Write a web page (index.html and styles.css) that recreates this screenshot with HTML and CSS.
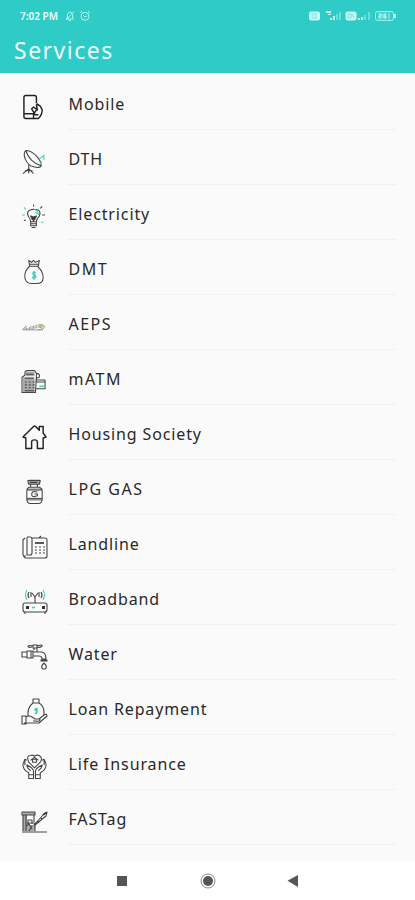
FILE: index.html
```html
<!DOCTYPE html>
<html lang="en">
<head>
<meta charset="utf-8">
<title>Services</title>
<link rel="stylesheet" href="styles.css">
</head>
<body>
<div class="screen">
<header class="header">
  <div class="status">
    <span class="time">7:02 PM</span>
    <svg class="bell" width="10" height="12" viewBox="0 0 10 12"><path d="M1.5 9h7L7.500 7V4.500Q7 2 5 2T2.500 4.500V7zM4 10.500h2M1 10L9 1.500"/></svg>
    <svg class="alarm" width="12" height="12" viewBox="0 0 12 12"><circle cx="6" cy="6.300" r="4"/><path d="M1 3L3 1M11 3L9 1M4 5l2 2 2-1"/></svg>
    <svg class="signals" width="88" height="12" viewBox="0 0 88 12">
      <rect class="fill" x="0" y="1.500" width="11" height="9" rx="2"/><path class="teal" d="M3 4h5M3 6h2M6 6h2M3 8h5"/>
      <path class="fill" d="M17 1h5v2h-5zM19 4h3v1h-3zM21 8h2v2h-2zM24 6h2v4h-2z"/><path class="fill faint" d="M27 4h2v6h-2zM30 2h2v8h-2z"/>
      <rect class="fill" x="36.500" y="1.500" width="11" height="9" rx="2"/><path class="teal" d="M39 4h3v4h-3zM43 4l2 4"/>
      <path class="fill" d="M49 8h2v2h-2zM52 7h2v3h-2z"/><path class="fill faint" d="M55 5h2v5h-2zM59 2h2v8h-2z"/>
      <rect x="66.500" y="1.700" width="18" height="8.600" rx="2"/><path class="fill" d="M85 4h2v4h-2z"/><rect class="fill faint" x="69" y="3.500" width="9" height="5"/><path d="M70 4h2v2h-2v2h2M77 4h-2v4h2V6h-2M80 3v6"/>
    </svg>
  </div>
  <h1 class="title">Services</h1>
</header>
<main class="list">
  <div class="row"><svg class="icon bold" viewBox="0 0 26 26"><path d="M15 9V3Q15 1 13 1H4Q2 1 2 3v20q0 2 2 2h13q4-4 4-9l-2-4-3-2-1 1M2 20h10M12 25v-4l1-1-3-5 2-2 4 3-1-5q2-1 3 1M13 21l4 0M15 16l-2 3"/></svg><span class="label">Mobile</span></div>
  <div class="row"><svg class="icon" viewBox="0 0 26 26"><path d="M4 1C0 5 4 16 12 18q6 2 8-1C20 10 11 1 4 1C6 9 13 15 20 17M7 16v5M1 25l6-5 5 5M7 20v5M3 22h8"/><path class="green" d="M18 10l2-2M20 7q3 0 3 4M20 12l-1 4M22 6l2 1"/></svg><span class="label">DTH</span></div>
  <div class="row"><svg class="icon" viewBox="0 0 26 26"><path d="M9 18q0-3-2-5Q3 6 12 5q9 0 6 7-3 3-3 6zM9 18v4h6v-4M9 20h6M10 24h4M9 12l3 2 3-2M12 14v4M10 15h4M12 0v2M21 11h3M19 4l2-2M2 17l2-1"/><path class="green" d="M12 5q5 1 5 6M2 3l2 2M0 11h3M20 18l2 1M14 8l2 2"/><path class="dark" d="M9 12l3 1 3-1-2 4h-2z"/></svg><span class="label">Electricity</span></div>
  <div class="row"><svg class="icon" viewBox="0 0 26 26"><path d="M8 7Q2 12 3 19q1 6 7 6h5q7 0 7-6 0-7-6-12zM8 7L7 1l3 2 2-2 2 2 4-2-1 6M8 5h9"/><path class="green thick" d="M14.500 13.500q-3-1-3 1 0 1.500 2 1.500 2 2.500-1 3.500l-2-1M12.500 12v9"/></svg><span class="label caps">DMT</span></div>
  <div class="row"><svg class="icon aeps" viewBox="0 0 26 26"><path d="M0 16l4-4 1 4M2 15h4M7 16l1-3h4M7 15h4M11 16l1-4q5-1 3 2h-3M22 12q-5-1-5 1l4 1q0 2-5 2"/><path class="gold" d="M15 11q8-2 9 2l-3 3M18 12l5 1"/><path d="M1 16h21"/></svg><span class="label caps">AEPS</span></div>
  <div class="row"><svg class="icon" viewBox="0 0 26 26"><path class="gray" d="M1 8h12v16H1zM4 2h9v5H4z"/><path d="M0 24V8l3-2V3l2-2h8l2 3v4l-1 16zM4 5h8M15 4q4 0 3 4l-3 1M3 9h9M14 11h10v9H14M14 13h10M3 13h2M7 13h2M11 13h2M3 16h2M7 16h2M11 16h2M3 19h2M7 19h2M11 19h2M3 22h10"/><path class="green thick" d="M18 17.500h5"/></svg><span class="label caps">mATM</span></div>
  <div class="row"><svg class="icon bold" viewBox="0 0 26 26"><path d="M1 13L12 2q1-1 2 0l4 4V2h4v7l3 4-3 1v11h-6v-7q0-2-3-2t-3 2v7H4V14z"/></svg><span class="label">Housing Society</span></div>
  <div class="row"><svg class="icon" viewBox="0 0 26 26"><path class="gray" d="M7 0h12v5H7zM5 19h16v3H5zM5 9h16v2H5z"/><path d="M6 1h13l-1 4H7zM9 5v3M16 5v3M7 8h11q3 1 3 4v8q0 5-4 5H9q-4 0-4-5v-8q0-3 2-4zM5 11h16M5 20h16M8 3h8"/><path d="M16 13q-6-2-6 3 1 3 6 1v-2h-3"/></svg><span class="label caps">LPG GAS</span></div>
  <div class="row"><svg class="icon wide" viewBox="0 0 26 26"><path d="M3 4L1 6v15l2 3h20q2 0 2-2V6q0-2-2-2H10M5 3h3q2 0 2 2v14q0 2-2 2H5V3M1 22h3M17 4l2-2"/><path class="bold" d="M13 9h9"/><path d="M13 13h2M17 13h2M21 13h2M13 16h2M17 16h2M21 16h2M13 19h2M17 19h2M21 19h2"/></svg><span class="label">Landline</span></div>
  <div class="row"><svg class="icon wide" viewBox="0 0 26 26"><path d="M3 14h20q2 0 2 2v5q0 2-2 2H3q-2 0-2-2v-5q0-2 2-2M13 14V7M3 23v2M23 23v2M10 4l3 4 3-4M7 3q-2 3 0 6M19 3q2 3 0 6M9 3v5M17 3v5"/><path class="green" d="M5 1Q2 6 5 11M21 1q3 5 0 10"/><path class="dark dot" d="M4 17h3v3H4zM20 17h3v3h-3z"/><path class="green thick" d="M10 18.500h3"/></svg><span class="label">Broadband</span></div>
  <div class="row"><svg class="icon wide" viewBox="0 0 26 26"><path d="M0 8h5V7h6v7H5v-1H0zM5 7v7M9 7v7M11 8h8q5 0 5 7h-4q0-3-3-3h-6M12 6V4M15 4v4M10 3Q6 4 6 2q2-1 5 0M15 2q6-2 5 0-2 2-5 1M11 1h4v3h-4zM19 16h6v1h-6zM22 19q-4 4-1 6h2q3-2-1-6"/></svg><span class="label">Water</span></div>
  <div class="row"><svg class="icon wide" viewBox="0 0 26 26"><path d="M11 0h6v4h-6zM11 4Q6 8 6 14v3M17 4q5 3 5 9v3M0 17h4v8H0zM4 18q3-2 6 0l3 2h5q0 3-4 2h-3M4 24h13l8-7q0-3-3-1l-5 4M2 24h13"/><path class="green thick" d="M16 10q-3-1-3 1l2 1q0 3-2 2M14.500 9v6"/></svg><span class="label">Loan Repayment</span></div>
  <div class="row"><svg class="icon" viewBox="0 0 26 26"><path d="M13 14L7 8Q4 1 9 1q3-1 4 1 2-2 5-1 4 3 1 7zM11 5h4v3h-4zM9 6l4-3 4 3M5 6L3 5 1 10q0 5 3 7l3 2v6h5v-7q0-4-7-7l1 3 3 3M21 6l2-1 2 5q0 5-3 7l-3 2v6h-5v-7q0-4 7-7l-1 3-3 3M7 21h5M14 21h5M3 6v5M23 6v5"/></svg><span class="label">Life Insurance</span></div>
  <div class="row"><svg class="icon wide fastag" viewBox="0 0 26 26"><path class="gray" d="M1 3h4v19H1zM4 16h9v6H4zM1 3h12v3H1z"/><path d="M0 3h13v3H0zM1 6v16M4 6v16M12 6v7M6 15v-4h4v4M5 14h8v8M0 23h25M4 17l3-2 3 5M7 22l3-5"/><path d="M12 16L22 5l3-2-1 4-11 9zM16 12l1 2M19 9l1 2"/><path class="bold" d="M21 6l3-2"/></svg><span class="label">FASTag</span></div>
</main>
<nav class="nav">
  <svg width="415" height="38" viewBox="0 0 415 38"><path d="M117 14h10v10h-10zM287.500 18.800L298 13v12z"/><circle cx="208" cy="19" r="5"/><circle class="ring" cx="208" cy="19" r="7"/></svg>
</nav>
</div>
</body>
</html>
```
FILE: styles.css
```css
* { box-sizing: border-box; }
body { margin: 0; background: #fafafa; font-family: "Noto Sans", sans-serif; }
.screen { width: 415px; height: 900px; display: flex; flex-direction: column; overflow: hidden; }
.header { height: 73px; flex: none; background: #2fcbc7; color: #effffd; }
.status { height: 31px; padding: 0 18px 0 20px; display: flex; align-items: center; }
.status svg { fill: none; stroke: #b4f5ef; stroke-width: 1; }
.status .fill { fill: #c6fbf5; stroke: none; }
.status .faint { opacity: .4; }
.status .teal { stroke: #7fe0da; }
.time { font-size: 10px; font-weight: 600; width: 39px; white-space: nowrap; }
.bell { margin-left: 6px; }
.alarm { margin-left: 4px; }
.signals { margin-left: auto; }
.title { margin: 0; padding-left: 14px; font-size: 23px; line-height: 38px; font-weight: 400; letter-spacing: 1.5px; }
.list { flex: 1; padding-top: 2px; }
.row { height: 55px; display: grid; grid-template-columns: 68px 328px; }
.icon { width: 25px; height: 26px; margin: 19px 0 0 22px; fill: none; stroke: #444; stroke-width: 1.1; stroke-linejoin: round; overflow: visible; }
.wide { width: 26px; }
.bold { stroke: #222; stroke-width: 1.5; }
.thick { stroke-width: 1.6; }
.green { stroke: #43cfb5; }
.gold { stroke: #a79b62; }
.gray { fill: #aaa; stroke: none; }
.dark { fill: #333; }
.dot { stroke: none; }
.aeps { stroke: #888; stroke-width: .8; }
.label { border-bottom: 1px solid #f1f1f1; color: #292929; font-size: 16px; line-height: 58px; height: 55px; padding-left: .5px; letter-spacing: .87px; }
.caps { letter-spacing: 1.5px; }
.nav { height: 38px; flex: none; background: #fff; }
.nav svg { display: block; fill: #555; }
.nav .ring { fill: none; stroke: #888; stroke-width: 1; }
```
